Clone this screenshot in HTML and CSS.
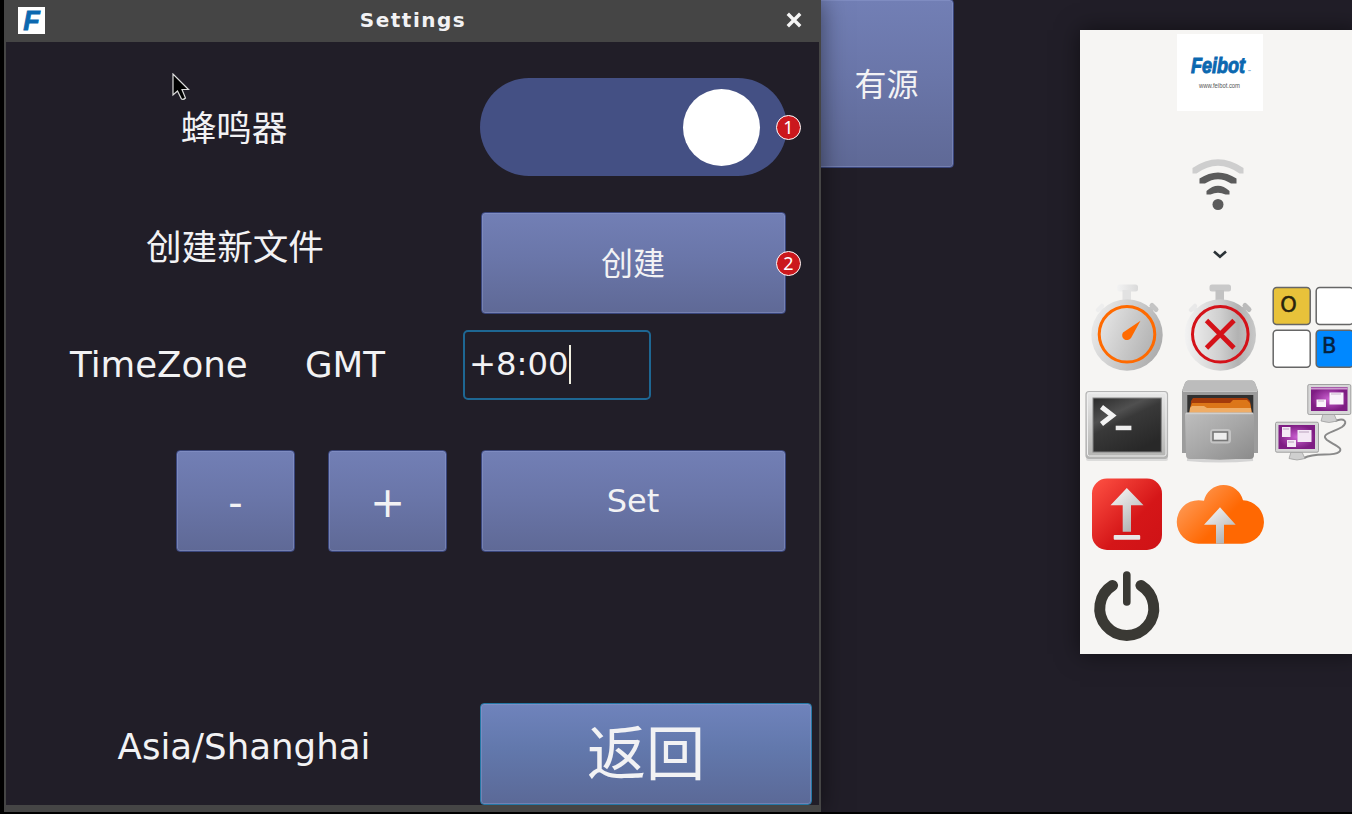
FILE: index.html
```html
<!DOCTYPE html>
<html lang="zh-CN">
<head>
  <meta charset="UTF-8">
  <meta name="viewport" content="width=device-width, initial-scale=1.0">
  <title>Settings</title>
  <link rel="stylesheet" href="styles.css">
</head>
<body>
  <div class="desktop">
    <!-- Main window behind the dialog -->
    <button class="btn source-btn" type="button">有源</button>

    <!-- Settings dialog -->
    <div class="window">
      <header class="titlebar">
        <span class="app-icon">F</span>
        <h1 class="title">Settings</h1>
        <svg class="close" viewBox="0 0 16 16">
          <path d="M3 3l10 10M13 3L3 13" stroke="#f4f4f4" stroke-width="3.400" stroke-linecap="square"/>
        </svg>
      </header>

      <main class="content">
        <div class="row row-buzzer">
          <span class="label">蜂鸣器</span>
          <div class="toggle"><span class="knob"></span></div>
          <span class="badge">1</span>
        </div>

        <div class="row row-create">
          <span class="label label-create">创建新文件</span>
          <button class="btn wide" type="button">创建</button>
          <span class="badge">2</span>
        </div>

        <div class="row row-zone">
          <span class="zone-label">TimeZone</span>
          <span class="gmt-label">GMT</span>
          <div class="zone-input"><span>+8:00</span><i class="caret"></i></div>
        </div>

        <div class="row row-step">
          <button class="btn step minus" type="button">-</button>
          <button class="btn step plus" type="button">+</button>
          <button class="btn wide set" type="button">Set</button>
        </div>

        <div class="row row-back">
          <span class="label label-city">Asia/Shanghai</span>
          <button class="btn back" type="button">返回</button>
        </div>
      </main>
    </div>

    <!-- Launcher panel -->
    <aside class="launcher">
      <svg class="logo" viewBox="0 0 86 77">
        <rect width="86" height="77" fill="#fff"/>
        <text class="logo-name" x="14" y="39" textLength="54" lengthAdjust="spacingAndGlyphs">Feibot</text>
        <text class="logo-tm" x="70.500" y="39">™</text>
        <text class="logo-url" x="22" y="54" textLength="41" lengthAdjust="spacingAndGlyphs">www.feibot.com</text>
      </svg>

      <svg class="wifi" viewBox="0 0 52 52">
        <path d="M.500 9Q26 -8.500 51.500 9V14.500H47.500Q26 -1 4.500 14.500H.500z" fill="#cecece"/>
        <path d="M7.500 19.500Q26 7.500 44.500 19.500V24.500H39Q26 16 13 24.500H7.500z" fill="#5b5b5b"/>
        <path d="M14.500 32Q26 21.500 37.500 32V35.500H33.500Q26 32 18.500 35.500H14.500z" fill="#5b5b5b"/>
        <circle cx="26" cy="45.500" r="5.500" fill="#5b5b5b"/>
      </svg>

      <svg class="chevron" viewBox="0 0 14 10" fill="none">
        <path d="M1 1.500l6 5.300 6-5.300" stroke="#2b3236" stroke-width="2.600"/>
      </svg>

      <div class="apps">
        <!-- start timing -->
        <svg class="app" viewBox="0 0 93 93">
          <defs>
            <linearGradient id="metal" x1="0" y1="0.200" x2="1" y2="0.600">
              <stop offset="0" stop-color="#ededed"/>
              <stop offset="1" stop-color="#adadad"/>
            </linearGradient>
            <linearGradient id="metalTop" x1="0" y1="0" x2="1" y2="0">
              <stop offset="0" stop-color="#f3f3f3"/>
              <stop offset="1" stop-color="#dadada"/>
            </linearGradient>
          </defs>
          <rect x="37" y="3.500" width="21" height="7" rx="2.500" fill="url(#metalTop)"/>
          <rect x="42.500" y="9" width="8.500" height="12" fill="#e2e2e2"/>
          <path d="M66 33l7-7" stroke="#c4c4c4" stroke-width="5"/>
          <path d="M72 24.500l4 4" stroke="#c4c4c4" stroke-width="5" stroke-linecap="round"/>
          <path d="M18 29l4-4M21 27l6 6" stroke="#eee" stroke-width="4.500" stroke-linecap="round"/>
          <circle cx="47" cy="54" r="35.700" fill="url(#metal)"/>
          <circle cx="47" cy="53.300" r="27.800" fill="none" stroke="#ff6a00" stroke-width="3"/>
          <path d="M60.500 39.700L43 51.500a4.600 4.600 0 1 0 8 5.500z" fill="#ff6a00"/>
        </svg>

        <!-- stop timing -->
        <svg class="app" viewBox="0 0 93 93">
          <defs>
            <linearGradient id="steel" x1="0" y1="0" x2="1" y2="0">
              <stop offset="0" stop-color="#f3f3f3"/>
              <stop offset="0.500" stop-color="#cfcfcf"/>
              <stop offset="0.750" stop-color="#b2b2b2"/>
              <stop offset="1" stop-color="#c8c8c8"/>
            </linearGradient>
          </defs>
          <rect x="36.500" y="3.500" width="21.500" height="7" rx="2.500" fill="#c9c9c9"/>
          <rect x="42.500" y="9" width="8.500" height="12" fill="#c2c2c2"/>
          <path d="M66 33l7-7" stroke="#bbb" stroke-width="5"/>
          <path d="M72 24.500l4 4" stroke="#bbb" stroke-width="5" stroke-linecap="round"/>
          <path d="M18 29l4-4M21 27l6 6" stroke="#e9e9e9" stroke-width="4.500" stroke-linecap="round"/>
          <circle cx="47.300" cy="54" r="35.700" fill="url(#steel)"/>
          <circle cx="47.300" cy="53.300" r="27.800" fill="none" stroke="#d41219" stroke-width="3"/>
          <path d="M33.500 39.500l27.500 27.500M61 39.500L33.500 67" stroke="#d41219" stroke-width="4.800"/>
        </svg>

        <!-- keyboard tiles -->
        <svg class="app" viewBox="0 0 93 93">
          <g stroke="#666" stroke-width="1.500">
            <rect x="7.200" y="6.500" width="37" height="37" rx="3.500" fill="#e8c23a"/>
            <rect x="50.200" y="6.500" width="37" height="37" rx="3.500" fill="#fff"/>
            <rect x="7.200" y="49.200" width="37" height="37" rx="3.500" fill="#fff"/>
            <rect x="50.200" y="49.200" width="37" height="37" rx="3.500" fill="#0088ff"/>
          </g>
          <text class="tile-text" x="14.300" y="31">O</text>
          <text class="tile-text tile-b" x="56" y="71.500">B</text>
        </svg>

        <!-- terminal -->
        <svg class="app" viewBox="0 0 93 93">
          <defs>
            <linearGradient id="frame" x1="0" y1="0" x2="0" y2="1">
              <stop offset="0" stop-color="#e9e9e9"/>
              <stop offset="1" stop-color="#b3b3b1"/>
            </linearGradient>
            <linearGradient id="screen" x1="0" y1="0" x2="0.600" y2="1">
              <stop offset="0" stop-color="#2a2a2a"/>
              <stop offset="0.350" stop-color="#505050"/>
              <stop offset="0.500" stop-color="#393939"/>
              <stop offset="1" stop-color="#282828"/>
            </linearGradient>
          </defs>
          <rect x="6" y="83" width="82" height="4" rx="2" fill="#ccc" opacity=".6"/>
          <rect x="6" y="17.500" width="81.500" height="67" rx="3" fill="url(#frame)" stroke="#b4b4b4" stroke-width="1.200"/>
          <rect x="7.500" y="19" width="78.500" height="63" rx="2" fill="none" stroke="#efefef" stroke-width="1"/>
          <rect x="13" y="24" width="68.300" height="54" fill="url(#screen)" stroke="#858585"/>
          <path d="M21.500 33l11 8.500-11 8.500" fill="none" stroke="#f4f4f4" stroke-width="5"/>
          <rect x="35.700" y="51.700" width="15.700" height="4.500" fill="#eee"/>
        </svg>

        <!-- file manager -->
        <svg class="app" viewBox="0 0 93 93">
          <defs>
            <linearGradient id="front" x1="0" y1="0" x2="1" y2="1">
              <stop offset="0" stop-color="#bebebe"/>
              <stop offset="0.500" stop-color="#a7a7a7"/>
              <stop offset="1" stop-color="#8b8b8b"/>
            </linearGradient>
          </defs>
          <path d="M9 79V17l3-8q1-2.500 3-2.500h64q2 0 3 2.500l3 8v62z" fill="#9c9c9c"/>
          <path d="M9 17l3-8q1-2.500 3-2.500h64q2 0 3 2.500l3 8z" fill="#bcbcbc"/>
          <path d="M10 17.500h74" stroke="#c6c6c6"/>
          <rect x="14.300" y="21" width="66" height="19" fill="#303030"/>
          <path d="M17 40l1-13 2-3h54l3 3 2 13z" fill="#a43b0b"/>
          <path d="M17 34l2-5h38l3-3h14l3 3 1 5z" fill="#dc7619"/>
          <path d="M16 40l1-6 2-2h12l3 2h44l1 6z" fill="#efad67"/>
          <path d="M14 85.500q33 3 66 0" stroke="#d4d4d4" stroke-width="3"/>
          <path d="M12 40q0-1.500 2-1.500h65q2 0 2 1.500v41q0 4-4 4H17q-4 0-4-4z" fill="url(#front)"/>
          <path d="M13 39.500h67" stroke="#d0d0d0" stroke-width="1.500"/>
          <rect x="37" y="55" width="21" height="14.500" rx="3.500" fill="#c4c4c4"/>
          <rect x="40" y="58" width="14.500" height="8.500" fill="#eee" stroke="#777" stroke-width="1.600"/>
        </svg>

        <!-- remote desktop -->
        <svg class="app" viewBox="0 0 93 93">
          <defs>
            <radialGradient id="purple">
              <stop offset="0" stop-color="#ca5fd0"/>
              <stop offset="1" stop-color="#7e1d83"/>
            </radialGradient>
          </defs>
          <path d="M69 47C78 43 83 48 76 53C66 59 54 60 61 66C68 71 78 74 73 78C67 83 50 78 38 84" fill="none" stroke="#8a8a8a" stroke-width="2"/>
          <path d="M57 40h11l3 7q-8 3-16 0z" fill="#cfcfcf" stroke="#999" stroke-width=".7"/>
          <rect x="41.800" y="10.500" width="43" height="30" rx="1.500" fill="#d7d7d7" stroke="#a0a0a0"/>
          <rect x="45" y="13" width="36.500" height="24" fill="url(#purple)"/>
          <path d="M45 14.500h36.500" stroke="#cf9bd1" stroke-width="2"/>
          <path d="M63.500 18.500h14v12h-14zM50.500 25.500h9.500v7.500h-9.500z" fill="#faf3fb"/>
          <path d="M65 20h10M52 27h6" stroke="#c8b4cb"/>
          <path d="M25 78h11l3 6.500q-8 3-16 0z" fill="#cfcfcf" stroke="#999" stroke-width=".7"/>
          <rect x="9.500" y="48.200" width="43" height="30" rx="1.500" fill="#d7d7d7" stroke="#a0a0a0"/>
          <rect x="12.500" y="51" width="36.500" height="24" fill="url(#purple)"/>
          <path d="M31.500 56h14v12h-14zM16 53h8.500v10H16zM21 66h9v7h-9z" fill="#f4e8f5"/>
          <path d="M33 58h10M17 55h6M22 68h6" stroke="#b9a2bd"/>
        </svg>

        <!-- upload backup -->
        <svg class="app" viewBox="0 0 93 93">
          <defs>
            <linearGradient id="red" x1="0" y1="0" x2="1" y2="1">
              <stop offset="0" stop-color="#ff5244"/>
              <stop offset="0.600" stop-color="#d51618"/>
              <stop offset="1" stop-color="#cf1216"/>
            </linearGradient>
            <linearGradient id="arrow" x1="0" y1="0" x2="0.600" y2="1">
              <stop offset="0" stop-color="#fafafa"/>
              <stop offset="1" stop-color="#b3b3b3"/>
            </linearGradient>
          </defs>
          <rect x="12" y="11.500" width="70" height="71.500" rx="15" fill="url(#red)"/>
          <path d="M46.800 21L63.500 38.300H51V64.800H42.700V38.300H30.500z" fill="url(#arrow)"/>
          <rect x="33.700" y="68" width="26.500" height="4.700" rx="1" fill="#e8e8e8"/>
        </svg>

        <!-- cloud upload -->
        <svg class="app" viewBox="0 0 93 93">
          <defs>
            <linearGradient id="orange" x1="0" y1="0.200" x2="0.750" y2="0.700">
              <stop offset="0.100" stop-color="#ff9852"/>
              <stop offset="0.750" stop-color="#ff6802"/>
            </linearGradient>
          </defs>
          <path d="M25.500 76.700a21.700 21.700 0 0 1 0-43.500q3 0 5.500.600a20 20 0 0 1 39-.5a21.700 21.700 0 0 1-1.500 43.400z" fill="url(#orange)"/>
          <path d="M47 40.300L62.700 57.800H51V76.700H43V57.800H31z" fill="url(#arrow)"/>
        </svg>

        <!-- spacer in third column -->
        <span class="app"></span>

        <!-- power off -->
        <svg class="app" viewBox="0 0 93 93" fill="none" stroke="#3a3934" stroke-linecap="round">
          <path d="M32.500 25.500A27 27 0 1 0 61 25.500" stroke-width="11"/>
          <path d="M46.800 15v27" stroke-width="7.600"/>
        </svg>
      </div>
    </aside>

    <!-- Mouse pointer -->
    <svg class="pointer" viewBox="0 0 18 28">
      <path d="M1 1v21l4.500-4 4 8q2 1 4-1l-3.500-8.500h6.500z" fill="#000" stroke="#ddd" stroke-width="1.200"/>
    </svg>
  </div>
</body>
</html>
```

FILE: styles.css
```css
* {
  box-sizing: border-box;
}
body {
  margin: 0;
  background-color: #000;
  overflow: hidden;
  font-family: "DejaVu Sans", "Noto Sans CJK SC", sans-serif;
  color: #f2f2f4;
}
svg {
  display: block;
}
.desktop {
  position: relative;
  width: 1348px;
  height: 812px;
  margin-left: 4px;
  background-color: #211e28;
}

/* buttons */
.btn {
  display: flex;
  align-items: center;
  justify-content: center;
  padding: 0;
  border: 1px solid #39457b;
  border-radius: 4px;
  background: linear-gradient(#727fb5, #6a76a9 45%, #5f6996);
  box-shadow: inset 0 0 0 1px rgba(145, 157, 208, 0.45);
  font-family: inherit;
  font-size: 32px;
  line-height: 1;
  color: #f2f2f4;
}
.source-btn {
  position: absolute;
  left: 796px;
  top: -1px;
  width: 154px;
  height: 169px;
  padding: 2px 0 0 19px;
}

/* dialog */
.window {
  position: absolute;
  left: 0;
  top: 0;
  width: 817px;
  height: 812px;
  border: solid #454545;
  border-width: 0 2px 7px;
  background-color: #211e28;
  box-shadow: 0 0 24px rgba(0, 0, 0, 0.5);
}
.titlebar {
  display: flex;
  align-items: center;
  justify-content: space-between;
  height: 42px;
  padding: 0 17px 2px 12px;
  background-color: #454545;
}
.app-icon {
  width: 27px;
  height: 27px;
  background-color: #fff;
  font: italic bold 27px/28px "Liberation Sans", sans-serif;
  text-align: center;
  color: #0b68b0;
  -webkit-text-stroke: 0.8px #0b68b0;
}
.title {
  margin: 0;
  padding-right: 5px;
  font-size: 20px;
  line-height: 24px;
  padding-bottom: 1px;
  letter-spacing: 1.5px;
}
.close {
  width: 16px;
  height: 16px;
}
.content {
  display: flex;
  flex-direction: column;
}
.row {
  display: flex;
  position: relative;
  align-items: center;
}
.label {
  width: 458px;
  flex: none;
  text-align: center;
  font-size: 35.6px;
  line-height: 40px;
}
.row-buzzer {
  margin-top: 36px;
  height: 98px;
  padding-left: 16px;
}
.row-buzzer .label,
.label-create {
  margin-left: -16px;
}
.row-buzzer .label {
  padding-top: 4px;
  padding-right: 2px;
}
.toggle {
  display: flex;
  align-items: center;
  justify-content: flex-end;
  width: 307px;
  height: 98px;
  margin-left: 16px;
  padding-right: 27px;
  border-radius: 49px;
  background-color: #445084;
}
.knob {
  width: 77px;
  height: 77px;
  border-radius: 50%;
  background-color: #fff;
}
.badge {
  position: absolute;
  left: 770px;
  top: 37px;
  width: 25px;
  height: 25px;
  border: 1px solid #fff;
  border-radius: 50%;
  background-color: #cb181d;
  font: 18px/23px "Noto Sans", sans-serif;
  text-align: center;
  color: #fff;
}
.row-create {
  margin-top: 36px;
  height: 102px;
  padding-left: 16px;
}
.label-create {
  padding-bottom: 30px;
}
.row-create .wide {
  margin-left: 17px;
  padding: 2px 1px 0 0;
}
.row-create .badge {
  top: 39px;
}
.wide {
  width: 305px;
  height: 102px;
}
.row-zone {
  margin-top: 16px;
  height: 70px;
  padding-left: 64px;
  font-size: 35.6px;
}
.zone-label {
  width: 235px;
  padding-bottom: 2px;
}
.gmt-label {
  width: 158px;
  padding-bottom: 2px;
}
.zone-input {
  display: flex;
  align-items: center;
  width: 188px;
  height: 70px;
  padding: 0 0 2px 4px;
  border: 2px solid #1e6793;
  border-radius: 5px;
  font-size: 32.3px;
}
.caret {
  width: 2px;
  height: 39px;
  background-color: #efeee0;
}
.row-step {
  margin-top: 50px;
  height: 102px;
  padding-left: 170px;
}
.step {
  width: 119px;
  height: 102px;
  margin-right: 34px;
  font-size: 42px;
}
.minus {
  margin-right: 33px;
  padding-top: 3px;
  font-size: 40px;
}
.plus {
  padding-top: 3px;
}
.set {
  padding-right: 1px;
}
.row-back {
  margin-top: 151px;
  height: 102px;
}
.label-city {
  padding-left: 18px;
  padding-bottom: 14px;
}
.back {
  width: 332px;
  height: 102px;
  margin-left: 16px;
  border-color: #2478a5;
  background: linear-gradient(#6f83bc, #6278ac 45%, #5b6997);
  font-size: 59px;
}

/* launcher */
.launcher {
  position: absolute;
  left: 1076px;
  top: 30px;
  width: 280px;
  height: 624px;
  display: flex;
  flex-direction: column;
  align-items: center;
  padding-top: 4px;
  background-color: #f6f5f3;
  box-shadow: 0 0 22px rgba(0, 0, 0, 0.5);
}
.logo {
  width: 86px;
  height: 77px;
}
.logo-name {
  font: italic bold 22px "Liberation Sans", sans-serif;
  fill: #0b68b0;
  stroke: #0b68b0;
  stroke-width: 1px;
}
.logo-tm {
  font-size: 4px;
  fill: #0b68b0;
}
.logo-url {
  font: 6.5px "Liberation Sans", sans-serif;
  fill: #555;
}
.wifi {
  width: 52px;
  height: 52px;
  margin-top: 48px;
  margin-right: 5px;
}
.chevron {
  width: 14px;
  height: 10px;
  margin-top: 39px;
}
.apps {
  display: grid;
  grid-template-columns: repeat(3, 93px);
  grid-auto-rows: 93px;
  align-self: flex-start;
  margin-top: 21px;
}
.app {
  width: 93px;
  height: 93px;
}
.tile-text {
  font-size: 21px;
  fill: #29230e;
  stroke: #29230e;
  stroke-width: 0.5px;
}
.tile-b {
  fill: #06213e;
  stroke: #06213e;
}
.pointer {
  position: absolute;
  left: 168px;
  top: 73px;
  width: 18px;
  height: 28px;
}
```
